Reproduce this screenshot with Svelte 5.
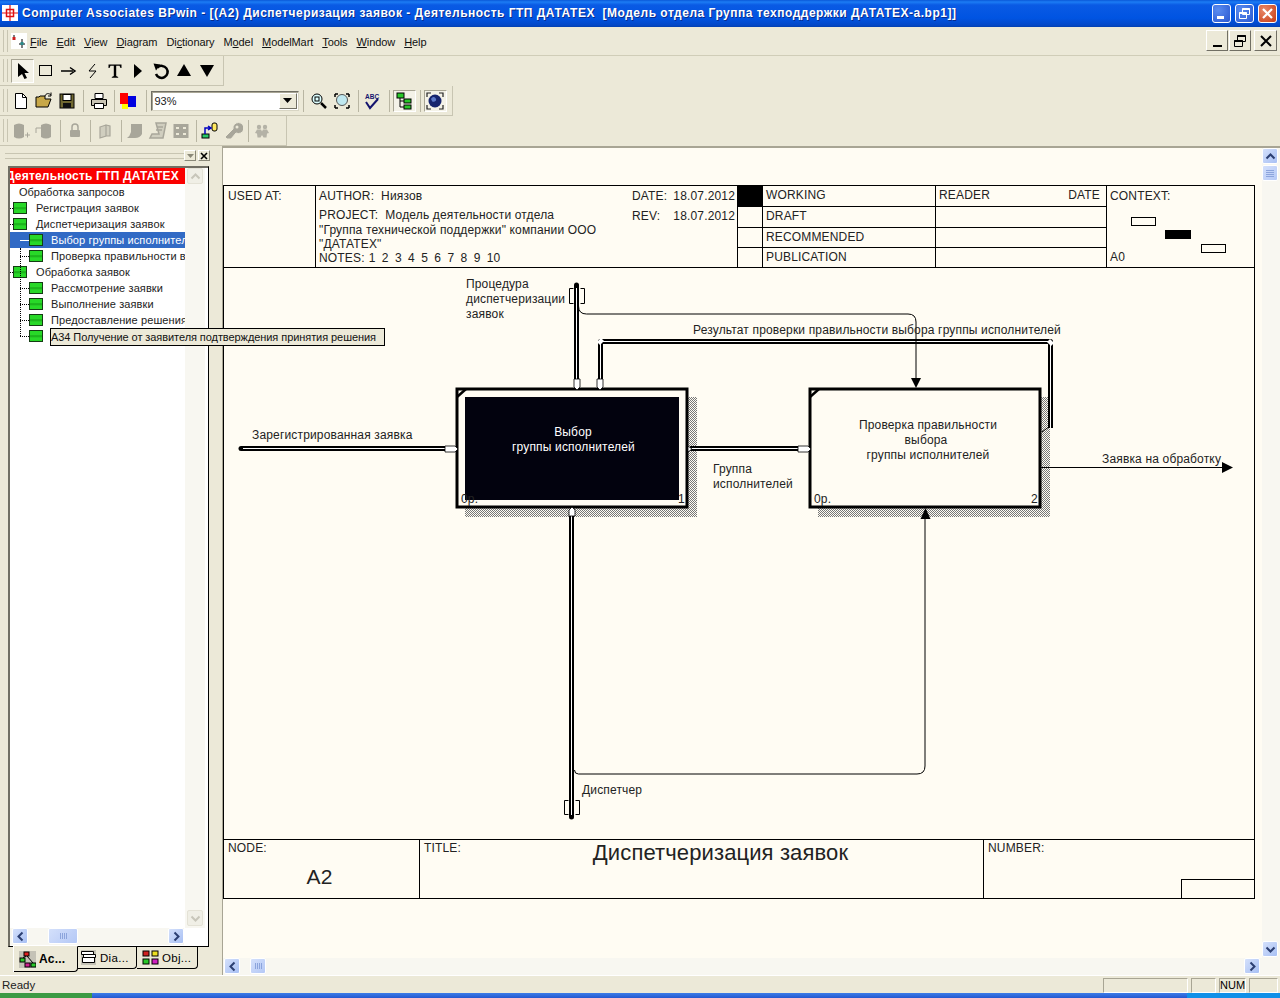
<script>
  const title = 'Computer Associates BPwin - [(A2) Диспетчеризация заявок - Деятельность ГТП ДАТАТЕХ  [Модель отдела Группа техподдержки ДАТАТЕХ-а.bp1]]';
  const menus = [
    ['F', 'ile'], ['E', 'dit'], ['V', 'iew'], ['D', 'iagram'], ['Di', 'c', 'tionary'], ['M', 'o', 'del'],
    ['M', 'odelMart'], ['T', 'ools'], ['W', 'indow'], ['H', 'elp']
  ];
  const tool1 = ['pointer', 'rect', 'arrow', 'squiggle', 'text', 'play', 'undo', 'up', 'down'];
  const tool3 = [
    ['g1'], ['g2'], [null, 8], ['lock'], [null, 7], ['g3'], [null, 7], ['g4'], ['g5'], ['g6'], [null, 6], ['model'], ['key'], [null, 6], ['people']
  ];
  const tree = [
    { level: 0, text: 'Обработка запросов', plain: true },
    { level: 1, text: 'Регистрация заявок' },
    { level: 1, text: 'Диспетчеризация заявок' },
    { level: 2, text: 'Выбор группы исполнителей', selected: true },
    { level: 2, text: 'Проверка правильности выбора группы исполнителей' },
    { level: 1, text: 'Обработка заявок' },
    { level: 2, text: 'Рассмотрение заявки' },
    { level: 2, text: 'Выполнение заявки' },
    { level: 2, text: 'Предоставление решения' },
    { level: 2, text: '' }
  ];
  const statuses = ['WORKING', 'DRAFT', 'RECOMMENDED', 'PUBLICATION'];
</script>

{#snippet icon(name)}
  <svg class="ico" viewBox="0 0 20 20" width="20" height="20">
    {#if name === 'pointer'}
      <path d="M5 2v14l4-3 2.500 5 2.500-1-2.500-5h4.500z" fill="#000" />
    {:else if name === 'rect'}
      <rect x="3.500" y="4.500" width="12" height="10" fill="none" stroke="#000" />
    {:else if name === 'arrow'}
      <path d="M2 10h12" stroke="#000" stroke-width="1.500" /><path d="M11 6.500l5 3.500-5 3.500" fill="none" stroke="#000" stroke-width="1.500" />
    {:else if name === 'squiggle'}
      <path d="M13 3l-6 7h7l-6 7" fill="none" stroke="#000" />
    {:else if name === 'text'}
      <path d="M3.500 3.500h13v3.500h-1l-1-2.300h-3.300V15l2 1v.700H6.800V16l2-1V4.700H5.500l-1 2.300h-1z" fill="#000" />
    {:else if name === 'play'}
      <path d="M6 3l8 7-8 7z" fill="#000" />
    {:else if name === 'undo'}
      <path d="M6.500 6.500A6 6 0 1 1 5 13" fill="none" stroke="#000" stroke-width="2.500" /><path d="M2.500 2.500l7 1-4.500 6z" fill="#000" />
    {:else if name === 'up'}
      <path d="M10 3l7 12H3z" fill="#000" />
    {:else if name === 'down'}
      <path d="M3 4h14l-7 12z" fill="#000" />
    {:else if name === 'new'}
      <path d="M4.500 2.500h7l4 4v11h-11z" fill="#fff" stroke="#000" /><path d="M11.500 2.500v4h4" fill="none" stroke="#000" />
    {:else if name === 'open'}
      <path d="M2 16V6h3l1-1h5v3h6l-3 8z" fill="#c8a848" stroke="#000" /><path d="M11 5c1-3 4-3 6-1M17 1.500V5h-3" fill="none" stroke="#000" />
    {:else if name === 'save'}
      <rect x="3" y="3" width="14" height="14" fill="#706830" stroke="#000" /><rect x="6" y="3.500" width="8" height="6" fill="#fff" stroke="#000" /><rect x="6" y="12" width="8" height="5" fill="#111" />
    {:else if name === 'print'}
      <path d="M6 2.500h8v5H6z" fill="#fff" stroke="#000" /><path d="M2.500 8.500h15v6h-15z" fill="#c8c4b4" stroke="#000" /><path d="M5.500 12.500h9v5h-9z" fill="#fff" stroke="#000" />
    {:else if name === 'colors'}
      <rect x="1" y="2" width="8" height="11" fill="#f00" /><rect x="9" y="5" width="8" height="11" fill="#0000e0" /><rect x="3" y="13" width="6" height="5" fill="#ff0" />
    {:else if name === 'zoomin'}
      <circle cx="8" cy="8" r="5" fill="#dff" stroke="#000" /><path d="M12 12l5 5" stroke="#000" stroke-width="2.500" /><rect x="6" y="6" width="4" height="4" fill="none" stroke="#000" />
    {:else if name === 'zoomfit'}
      <circle cx="10" cy="9" r="5.500" fill="#bfe8f0" stroke="#555" /><path d="M3 3h3M3 3v3M17 3h-3M17 3v3M3 17h3M3 17v-3M17 17h-3M17 17v-3" stroke="#000" stroke-width="1.500" fill="none" />
    {:else if name === 'spell'}
      <text x="3" y="8" class="abc">ABC</text><path d="M4 11l4 6 8-9" fill="none" stroke="#14146e" stroke-width="2" />
    {:else if name === 'treeview'}
      <rect x="3" y="2" width="7" height="5" fill="#28c828" stroke="#000" /><rect x="10" y="8" width="7" height="4" fill="#28c828" stroke="#000" /><rect x="10" y="14" width="7" height="4" fill="#28c828" stroke="#000" /><path d="M6 7v9h4M6 10h4" fill="none" stroke="#000" />
    {:else if name === 'globe'}
      <circle cx="10" cy="10" r="6.500" fill="#16246e" /><path d="M6 8c2-3 4-2 5 0s-3 4-4 2z" fill="#5c78c8" /><path d="M2 6V2h4M18 6V2h-4M2 14v4h4M18 14v4h-4" fill="none" stroke="#222" stroke-width="1.200" />
    {:else if name === 'g1'}
      <path d="M3 4q5-3 10 0v12q-5 3-10 0z" fill="#a8a69a" /><path d="M14 14h5M16.500 11.500v5" stroke="#a8a69a" />
    {:else if name === 'g2'}
      <path d="M7 4q5-3 10 0v12q-5 3-10 0z" fill="#a8a69a" /><path d="M7 7H2v5" fill="none" stroke="#a8a69a" />
    {:else if name === 'lock'}
      <path d="M7 9V6a3 3 0 0 1 6 0v3" fill="none" stroke="#a8a69a" stroke-width="1.500" /><rect x="5" y="9" width="10" height="7" rx="1" fill="#a8a69a" />
    {:else if name === 'g3'}
      <path d="M5 6l6-2v11l-6 2zM11 4l4 1v10l-4 0z" fill="#d0cebf" stroke="#a8a69a" stroke-width="1.200" />
    {:else if name === 'g4'}
      <path d="M6 3h11v10q-2 4-7 4H2q3-2 4-6z" fill="#a8a69a" />
    {:else if name === 'g5'}
      <path d="M8 2h10l-3 15H2l2-4h7zM9 6h6M8 9h6" fill="#d0cebf" stroke="#a8a69a" stroke-width="1.500" />
    {:else if name === 'g6'}
      <rect x="2.500" y="3" width="15" height="14" fill="#a8a69a" /><path d="M5 7h3M12 7h3M5 13h3M12 13h3" stroke="#ece9d8" stroke-width="2" />
    {:else if name === 'model'}
      <rect x="2" y="13" width="7" height="4" fill="#28c868" stroke="#000" /><rect x="12" y="2" width="5" height="8" rx="2" fill="#ffe860" stroke="#000" /><path d="M5 13V7h5M8 5l3 2-3 2" fill="none" stroke="#0000c0" stroke-width="1.500" />
    {:else if name === 'key'}
      <path d="M2 16l8-8a5.500 5.500 0 1 1 3 4l-5 6H4z" fill="#a8a69a" stroke="#ece9d8" /><circle cx="14" cy="6" r="1.500" fill="#ece9d8" />
    {:else if name === 'people'}
      <circle cx="7" cy="6" r="2.200" fill="#b4b2a6" /><circle cx="13" cy="6" r="2.200" fill="#b4b2a6" /><path d="M3 12l2-3.500h4l1 2 1-2h4l2 3.500-2 .500-.500 4h-3L10 14l-1.500 2.500h-3l-.5-4z" fill="#b4b2a6" />
    {/if}
  </svg>
{/snippet}

{#snippet scrollbtn(dir, off)}
  <span class="sbtn" class:off>
    <svg viewBox="0 0 11 11" width="11" height="11">
      <path
        d={dir === 'up' ? 'M1.500 7.500l4-4 4 4' : dir === 'down' ? 'M1.500 3.500l4 4 4-4' : dir === 'left' ? 'M7.500 1.500l-4 4 4 4' : 'M3.500 1.500l4 4-4 4'}
        fill="none"
        stroke={off ? '#c8c6ba' : '#2c3f72'}
        stroke-width="2"
      />
    </svg>
  </span>
{/snippet}

<div class="window">
  <header class="titlebar">
    <svg class="appicon" viewBox="0 0 16 16" width="16" height="16">
      <rect width="16" height="16" fill="#fff" />
      <rect x="4.500" y="4.500" width="7" height="7" fill="none" stroke="#e01010" stroke-width="1.500" />
      <path d="M8 0v16M0 8h16" stroke="#e01010" stroke-width="1.200" />
    </svg>
    <span class="titletext">{title}</span>
    <div class="capbtns">
      <span class="cap"><i class="minbar"></i></span>
      <span class="cap">
        <svg viewBox="0 0 19 19" width="19" height="19"><path d="M7.500 4.500h7v6h-7zM4.500 8.500h7v6h-7z" fill="none" stroke="#fff" /><path d="M7.500 5h7M4.500 9h7" stroke="#fff" stroke-width="2" /></svg>
      </span>
      <span class="cap close">
        <svg viewBox="0 0 19 19" width="19" height="19"><path d="M5 5l9 9M14 5l-9 9" stroke="#fff" stroke-width="2.200" /></svg>
      </span>
    </div>
  </header>

  <nav class="menubar">
    <i class="grip"></i>
    <svg class="docicon" viewBox="0 0 16 16" width="16" height="16">
      <rect width="16" height="16" fill="#fff" />
      <path d="M3 2v3M11 6v9M8 11h6" stroke="#000" /><rect x="1.500" y="4" width="3" height="3" fill="#d02020" /><rect x="9.500" y="9" width="3" height="3" fill="#2a8a8a" />
    </svg>
    {#each menus as m}
      <span class="menu">
        {#if m.length === 3}{m[0]}<u>{m[1]}</u>{m[2]}{:else}<u>{m[0]}</u>{m[1]}{/if}
      </span>
    {/each}
    <div class="mdibtns">
      <span class="mdi"><i class="mdimin"></i></span>
      <span class="mdi">
        <svg viewBox="0 0 14 14" width="14" height="14"><path d="M4.500 1.500h8v6h-8zM1.500 6.500h8v6h-8z" fill="#ece9d8" stroke="#000" /><path d="M4.500 2h8M1.500 7h8" stroke="#000" stroke-width="2" /></svg>
      </span>
      <span class="mdi mdix">
        <svg viewBox="0 0 14 14" width="14" height="14"><path d="M2 2l10 10M12 2L2 12" stroke="#000" stroke-width="2" /></svg>
      </span>
    </div>
  </nav>

  <div class="toolbar t1">
    <i class="grip"></i>
    {#each tool1 as name, i}
      <span class="tbtn" class:pressed={i === 0}>{@render icon(name)}</span>
    {/each}
  </div>

  <div class="toolbar t2">
    <i class="grip"></i>
    <span class="tbtn">{@render icon('new')}</span>
    <span class="tbtn">{@render icon('open')}</span>
    <span class="tbtn">{@render icon('save')}</span>
    <i class="sep s9"></i>
    <span class="tbtn">{@render icon('print')}</span>
    <i class="sep s7"></i>
    <span class="tbtn">{@render icon('colors')}</span>
    <i class="sep s10"></i>
    <div class="combo">
      <span class="comboval">93%</span>
      <span class="combobtn"><svg viewBox="0 0 9 5" width="9" height="5"><path d="M0 0h9L4.500 5z" fill="#000" /></svg></span>
    </div>
    <i class="sep s9"></i>
    <span class="tbtn">{@render icon('zoomin')}</span>
    <span class="tbtn">{@render icon('zoomfit')}</span>
    <i class="sep s7"></i>
    <span class="tbtn">{@render icon('spell')}</span>
    <i class="sep s9"></i>
    <span class="tbtn toggled">{@render icon('treeview')}</span>
    <i class="sep s8"></i>
    <span class="tbtn toggled">{@render icon('globe')}</span>
  </div>

  <div class="toolbar t3">
    <i class="grip"></i>
    {#each tool3 as [name, w]}
      {#if name}
        <span class="tbtn">{@render icon(name)}</span>
      {:else}
        <i class="sep" style:width="{w}px"></i>
      {/if}
    {/each}
  </div>

  <main class="work">
    <aside class="dock">
      <div class="dockhead">
        <i class="dockgrip"></i>
        <span class="dockbtn drop"><svg viewBox="0 0 7 4" width="7" height="4"><path d="M0 0h7L3.500 4z" fill="#8a8878" /></svg></span>
        <span class="dockbtn"><svg viewBox="0 0 8 8" width="8" height="8"><path d="M1 1l6 6M7 1L1 7" stroke="#000" stroke-width="1.600" /></svg></span>
      </div>
      <div class="treeframe">
        <div class="treebody">
          <div class="treelist">
            <div class="treehead"><span>Деятельность ГТП ДАТАТЕХ</span></div>
            <div class="rows">
              {#each tree as row}
                <div class="row lv{row.level}" class:selected={row.selected}>
                  {#if !row.plain}
                    <i class="conn"></i>
                    <i class="treeicon"></i>
                  {/if}
                  <span class="label">{row.text}</span>
                </div>
              {/each}
              <i class="vline"></i>
            </div>
          </div>
          <div class="vscroll small">
            {@render scrollbtn('up', true)}
            {@render scrollbtn('down', true)}
          </div>
        </div>
        <div class="hscroll small">
          {@render scrollbtn('left')}
          <span class="thumb hthumb tree-thumb"><b></b></span>
          <span class="fill"></span>
          {@render scrollbtn('right')}
        </div>
      </div>
      <div class="tabs">
        <span class="tab active">
          <svg viewBox="0 0 17 17" width="17" height="17"><rect width="17" height="17" fill="#c4c2b6" /><rect x="5" y="1" width="5" height="4" fill="#e02020" stroke="#000" /><rect x="1" y="7" width="5" height="4" fill="#28c828" stroke="#000" /><rect x="6" y="12" width="5" height="4" fill="#d02090" stroke="#000" /><rect x="12" y="12" width="5" height="4" fill="#28c828" stroke="#000" /><path d="M7 5l-3 2M8 5l6 7" stroke="#000" /></svg>
          <b>Ac...</b>
        </span>
        <span class="tab dia">
          <svg viewBox="0 0 17 17" width="17" height="17"><rect x="1" y="1" width="15" height="15" fill="#c4c2b6" /><path d="M1.500 2.500h12v3h-12zM3.500 5.500h12v3h-12zM2.500 8.500h12v5h-12z" fill="#fff" stroke="#000" /></svg>
          Dia...
        </span>
        <span class="tab obj">
          <svg viewBox="0 0 17 17" width="17" height="17"><rect x="1" y="2" width="6" height="5" fill="#d02020" stroke="#000" /><rect x="10" y="2" width="6" height="5" fill="#ece020" stroke="#000" /><rect x="1" y="10" width="6" height="5" fill="#28c828" stroke="#000" /><rect x="10" y="10" width="6" height="5" fill="#d020c0" stroke="#000" /></svg>
          Obj...
        </span>
      </div>
      <div class="tooltip">А34 Получение от заявителя подтверждения принятия решения</div>
    </aside>

    <section class="sheetwrap">
      <div class="sheetrow">
        <div class="canvas">
          <div class="form">
            <div class="formhead">
              <div class="cell usedat">USED AT:</div>
              <div class="cell author">
                <div class="authorcol">
                  <div class="authorline">AUTHOR:&nbsp; Ниязов</div>
                  <div class="project">PROJECT:&nbsp; Модель деятельности отдела<br />"Группа технической поддержки" компании ООО<br />"ДАТАТЕХ"</div>
                  <div class="notes">NOTES:<span class="digits">1 2 3 4 5 6 7 8 9 10</span></div>
                </div>
                <div class="datecol">
                  <div class="dline"><span>DATE:</span><span>18.07.2012</span></div>
                  <div class="dline rev"><span>REV:</span><span>18.07.2012</span></div>
                </div>
              </div>
              <div class="status">
                {#each statuses as s, i}
                  <div class="st mark" class:black={i === 0}></div>
                  <div class="st name">{s}</div>
                  <div class="st reader">
                    {#if i === 0}<span>READER</span><span>DATE</span>{/if}
                  </div>
                {/each}
              </div>
              <div class="cell context">
                <span>CONTEXT:</span>
                <i class="ctx c1"></i>
                <i class="ctx c2"></i>
                <i class="ctx c3"></i>
                <span class="ctxnode">A0</span>
              </div>
            </div>

            <svg class="diagram" viewBox="224 268 1030 571" width="1030" height="571">
              <defs>
                <pattern id="dither" width="2" height="2" patternUnits="userSpaceOnUse">
                  <rect width="2" height="2" fill="#fffcf3" />
                  <rect width="1" height="1" fill="#777" />
                  <rect x="1" y="1" width="1" height="1" fill="#777" />
                </pattern>
              </defs>

              <!-- shadows -->
              <path d="M688 397h9v120H465v-9h223z" fill="url(#dither)" />
              <path d="M1041 397h9v120H818v-9h223z" fill="url(#dither)" />

              <!-- tunnel arrows -->
              <g fill="none" stroke-linejoin="round">
                <path d="M241 448.500H450" stroke="#000" stroke-width="5" stroke-linecap="round" />
                <path d="M243 448.500H450" stroke="#fff" />
                <path d="M576.500 285V384" stroke="#000" stroke-width="5" stroke-linecap="round" />
                <path d="M576.500 288V384" stroke="#fff" />
                <path d="M600.500 384V341.500H1050.500V428" stroke="#000" stroke-width="5" />
                <path d="M600.500 384V341.500H1050.500V428" stroke="#fff" />
                <path d="M690 448.500H803" stroke="#000" stroke-width="5" />
                <path d="M690 448.500H803" stroke="#fff" />
                <path d="M571.500 514V817" stroke="#000" stroke-width="5" stroke-linecap="round" />
                <path d="M571.500 514V815" stroke="#fff" />
                <path d="M573.500 288.500h-4v15h4M580.500 288.500h4v15h-4" stroke="#000" />
                <path d="M568.500 800.500h-4v14h4M575.500 800.500h4v14h-4" stroke="#000" />
                <path d="M578.500 300v6q0 8 8 8H908q8 0 8 8V380" stroke="#000" />
                <path d="M574.500 770q0 4 4 4H917q8 0 8-8V518" stroke="#000" />
                <path d="M1041 467.500H1224" stroke="#000" />
                <path d="M1042 432l8-6" stroke="#000" />
              </g>
              <path d="M911 378h10l-5 10z" fill="#000" />
              <path d="M1222 462l11 5.500-11 5.500z" fill="#000" />
              <path d="M925.500 508l5 11h-10z" fill="#000" />

              <!-- boxes -->
              <rect x="457" y="389" width="230" height="118" fill="#fffcf3" stroke="#000" stroke-width="3" />
              <rect x="465" y="397" width="214" height="103" fill="#02020e" />
              <path d="M457 397l9-8" stroke="#000" stroke-width="2.500" />
              <rect x="810" y="389" width="230" height="118" fill="#fffcf3" stroke="#000" stroke-width="3" />
              <path d="M810 397l9-8" stroke="#000" stroke-width="2.500" />

              <!-- arrow heads on the box edges -->
              <g fill="#fff" stroke="#000" stroke-width="0.800">
                <path d="M445 446h10l3 3-3 3h-10z" />
                <path d="M798 446h10l3 3-3 3h-10z" />
                <path d="M574 379h6v8l-3 3-3-3z" />
                <path d="M597 379h6v8l-3 3-3-3z" />
                <path d="M569 516h6v-6l-3-3-3 3z" />
                <path d="M688 446l4 3-4 3z" />
              </g>
              <path d="M597 342l4-4 3 3-4 4z" fill="#fff" />
              <path d="M1047 342l4 4 3-3-4-4z" fill="#fff" />

              <g class="dtext">
                <text x="252" y="439">Зарегистрированная заявка</text>
                <text x="466" y="288">Процедура</text>
                <text x="466" y="303">диспетчеризации</text>
                <text x="466" y="318">заявок</text>
                <text x="693" y="334">Результат проверки правильности выбора группы исполнителей</text>
                <text x="713" y="473">Группа</text>
                <text x="713" y="488">исполнителей</text>
                <text x="1102" y="463">Заявка на обработку</text>
                <text x="582" y="794">Диспетчер</text>
                <text x="573" y="436" class="mid white">Выбор</text>
                <text x="573.500" y="451" class="mid white">группы исполнителей</text>
                <text x="461" y="503">0р.</text>
                <text x="678" y="503">1</text>
                <text x="928" y="429" class="mid">Проверка правильности</text>
                <text x="926" y="444" class="mid">выбора</text>
                <text x="928" y="459" class="mid">группы исполнителей</text>
                <text x="814" y="503">0р.</text>
                <text x="1031" y="503">2</text>
              </g>
            </svg>

            <div class="formfoot">
              <div class="fcell nodecell">
                <span>NODE:</span>
                <span class="nodeval">A2</span>
              </div>
              <div class="fcell ftitle">
                <span>TITLE:</span>
                <span class="titleval">Диспетчеризация заявок</span>
              </div>
              <div class="fcell number">
                <span>NUMBER:</span>
                <i class="numbox"></i>
              </div>
            </div>
          </div>
        </div>
        <div class="vscroll large">
          {@render scrollbtn('up')}
          <span class="thumb vthumb"><b></b></span>
          <span class="fill"></span>
          {@render scrollbtn('down')}
        </div>
      </div>
      <div class="hscroll large">
        {@render scrollbtn('left')}
        <span class="thumb hthumb big"><b></b></span>
        <span class="fill"></span>
        {@render scrollbtn('right')}
      </div>
    </section>
  </main>

  <footer class="statusbar">
    <span class="ready">Ready</span>
    <span class="pane p1"></span>
    <span class="pane p2"></span>
    <span class="pane p3">NUM</span>
    <span class="pane p4"></span>
  </footer>
  <div class="taskbar"><i class="start"></i><i class="tray"></i></div>
</div>

<style>
  :global(body) {
    margin: 0;
    background: #ece9d8;
  }

  .window {
    width: 1280px;
    height: 998px;
    overflow: hidden;
    display: flex;
    flex-direction: column;
    background: #ece9d8;
    font-family: "Liberation Sans", Arial, sans-serif;
    font-size: 11px;
    color: #000;
  }

  i {
    display: block;
    font-style: normal;
  }

  .titlebar {
    height: 27px;
    flex: none;
    box-sizing: border-box;
    display: flex;
    align-items: center;
    padding: 0 3px 1px 2px;
    background: linear-gradient(#0a58d8 0, #1c7cf4 2px, #0a5ae4 5px, #0054e2 18px, #0348c8 25px, #0240b0 27px);
    color: #fff;
  }

  .appicon {
    flex: none;
    margin-right: 4px;
  }

  .titletext {
    font-size: 12px;
    font-weight: bold;
    letter-spacing: 0.5px;
    white-space: pre;
    text-shadow: 1px 1px 0 #0a2c8c;
  }

  .capbtns {
    margin-left: auto;
    display: flex;
    gap: 4px;
  }

  .cap {
    width: 19px;
    height: 19px;
    box-sizing: border-box;
    border: 1px solid #fff;
    border-radius: 3px;
    background: radial-gradient(circle at 30% 30%, #5a8cf0, #2a58d0);
    position: relative;
    display: block;
  }

  .cap svg {
    position: absolute;
    left: -1px;
    top: -1px;
  }

  .cap.close {
    background: radial-gradient(circle at 30% 30%, #e88868, #c83c14);
  }

  .minbar {
    width: 7px;
    height: 3px;
    background: #fff;
    margin: 11px 0 0 4px;
  }

  .menubar {
    height: 29px;
    flex: none;
    box-sizing: border-box;
    display: flex;
    align-items: center;
    padding-left: 3px;
    border-bottom: 1px solid #d0cdb8;
  }

  .grip {
    flex: none;
    width: 5px;
    align-self: stretch;
    margin: 3px 0;
    border-left: 1px solid #c8c5b2;
    border-right: 1px solid #c8c5b2;
    box-sizing: border-box;
  }

  .docicon {
    margin: 0 3px 0 3px;
    flex: none;
  }

  .menu {
    margin: 1px 9.100px 0 0;
    font-size: 11px;
    letter-spacing: -0.1px;
    color: #111;
  }

  .mdibtns {
    margin-left: auto;
    display: flex;
    gap: 1px;
    padding-right: 3px;
    margin-top: -1px;
  }

  .mdi {
    width: 22px;
    height: 21px;
    box-sizing: border-box;
    border: 1px solid;
    border-color: #fff #716f64 #716f64 #fff;
    display: flex;
    align-items: center;
    justify-content: center;
  }

  .mdix {
    margin-left: 2px;
    width: 23px;
  }

  .mdimin {
    width: 9px;
    height: 2px;
    background: #000;
    margin-top: 10px;
  }

  .toolbar {
    height: 30px;
    flex: none;
    box-sizing: border-box;
    display: flex;
    align-items: center;
    padding-left: 3px;
    border-bottom: 1px solid #c8c5b2;
    border-right: 1px solid #c8c5b2;
  }

  .toolbar .grip {
    margin-right: 1.500px;
  }

  .t1 {
    width: 224px;
  }

  .t1 .grip {
    margin-right: 3px;
  }

  .t2 {
    width: 453px;
  }

  .t3 {
    width: 287px;
  }

  .tbtn {
    width: 23px;
    height: 22px;
    box-sizing: border-box;
    flex: none;
    display: flex;
    align-items: center;
    justify-content: center;
  }

  .tbtn.pressed,
  .tbtn.toggled {
    border: 1px solid;
    border-color: #a8a594 #fff #fff #a8a594;
    background: #f4f2e8;
  }

  .tbtn.pressed {
    height: 24px;
  }

  .sep {
    flex: none;
    height: 22px;
    background: linear-gradient(90deg, transparent 50%, #b8b5a2 50%, #b8b5a2 calc(50% + 1px), transparent calc(50% + 1px));
  }

  .s7 { width: 7px; }
  .s8 { width: 8px; }
  .s9 { width: 9px; }
  .s10 { width: 10px; }

  .abc {
    font-size: 6.500px;
    font-weight: bold;
    fill: #14146e;
  }

  .combo {
    flex: none;
    width: 148px;
    height: 20px;
    box-sizing: border-box;
    display: flex;
    align-items: stretch;
    background: #fff;
    border: 1px solid;
    border-color: #716f64 #d8d5c4 #d8d5c4 #716f64;
    box-shadow: inset 1px 1px 0 #a8a594;
  }

  .comboval {
    flex: 1;
    padding: 3px 0 0 3px;
    font-size: 11px;
    color: #222;
  }

  .combobtn {
    width: 16px;
    margin: 1px;
    background: #ece9d8;
    border: 1px solid;
    border-color: #fff #716f64 #716f64 #fff;
    display: flex;
    align-items: center;
    justify-content: center;
  }

  .work {
    flex: 1;
    min-height: 0;
    display: flex;
  }

  .dock {
    flex: none;
    width: 222px;
    position: relative;
    display: flex;
    flex-direction: column;
    padding: 4px 0 0 8px;
    box-sizing: border-box;
  }

  .dockhead {
    height: 16px;
    margin-left: -3px;
    width: 205px;
    display: flex;
    align-items: flex-start;
    flex: none;
  }

  .dockgrip {
    flex: 1;
    height: 4px;
    margin-top: 3px;
    border-top: 1px solid #c8c5b2;
    border-bottom: 1px solid #c8c5b2;
  }

  .dockbtn {
    width: 12px;
    height: 11px;
    box-sizing: border-box;
    border: 1px solid;
    border-color: #fff #8a8878 #8a8878 #fff;
    display: flex;
    align-items: center;
    justify-content: center;
    flex: none;
  }

  .dockbtn.drop {
    margin-right: 2px;
  }

  .treeframe {
    width: 201px;
    height: 781px;
    box-sizing: border-box;
    flex: none;
    border: 1px solid #000;
    border-left-color: #716f64;
    border-top-color: #716f64;
    padding: 1px;
    display: flex;
    flex-direction: column;
    background: #fff;
    box-shadow: inset 1px 1px 0 #716f64;
  }

  .treebody {
    flex: 1;
    min-height: 0;
    display: flex;
  }

  .treelist {
    width: 175px;
    overflow: hidden;
    flex: none;
    background: #fff;
  }

  .treehead {
    height: 16px;
    background: #fa0000;
    color: #fff;
    font-size: 12px;
    font-weight: bold;
    line-height: 16px;
    white-space: nowrap;
    display: flex;
    justify-content: flex-end;
    padding-right: 6px;
    letter-spacing: 0.2px;
  }

  .rows {
    position: relative;
  }

  .row {
    height: 16px;
    display: flex;
    align-items: center;
    white-space: nowrap;
    font-size: 11px;
    letter-spacing: 0.1px;
    color: #222;
    position: relative;
    overflow: hidden;
  }

  .row.lv0 {
    padding-left: 9px;
    letter-spacing: 0;
  }

  .row.lv1 {
    padding-left: 0;
  }

  .row.lv2 {
    padding-left: 10px;
  }

  .conn {
    width: 9px;
    border-bottom: 1px dotted #000;
    flex: none;
  }

  .lv1 .conn {
    width: 3px;
  }

  .treeicon {
    width: 14px;
    height: 12px;
    box-sizing: border-box;
    flex: none;
    background: linear-gradient(#28d828, #28d828 35%, #18a818 50%, #28d828 70%);
    border: 1px solid #143c14;
  }

  .label {
    margin-left: 8px;
  }

  .lv0 .label {
    margin-left: 0;
  }

  .lv1 .label {
    margin-left: 9px;
  }

  .row.selected {
    background: #316ac5;
    color: #fff;
  }

  .selected .conn {
    border-bottom: 1px solid #fff;
  }

  .vline {
    position: absolute;
    left: 10px;
    top: 64px;
    height: 88px;
    border-left: 1px dotted #000;
  }

  .vscroll {
    flex: none;
    display: flex;
    flex-direction: column;
    background: #f8f7f1;
  }

  .vscroll.small {
    width: 20px;
    justify-content: space-between;
    padding-left: 2px;
    box-sizing: border-box;
    padding-bottom: 2px;
  }

  .vscroll.large {
    width: 18px;
    padding: 0 0 1px;
    box-sizing: border-box;
    gap: 1px;
  }

  .hscroll {
    flex: none;
    display: flex;
    height: 17px;
    box-sizing: border-box;
    background: #f8f7f1;
    gap: 0;
  }

  .hscroll.small {
    padding-left: 2px;
    margin-right: 23px;
  }

  .hscroll.large {
    height: 17px;
    padding: 0 20px 0 1px;
  }

  .sbtn {
    width: 16px;
    height: 16px;
    flex: none;
    box-sizing: border-box;
    border: 1px solid #fff;
    border-radius: 2px;
    background: linear-gradient(135deg, #d4e0fb, #a8c0f4);
    display: flex;
    align-items: center;
    justify-content: center;
  }

  .sbtn.off {
    background: #f0efe6;
    border-color: #e4e2d6;
  }

  .thumb {
    box-sizing: border-box;
    border: 1px solid #fff;
    border-radius: 2px;
    background: linear-gradient(135deg, #d4e0fb, #b4c8f6);
    display: flex;
    align-items: center;
    justify-content: center;
    flex: none;
  }

  .thumb b {
    display: block;
  }

  .hthumb {
    height: 16px;
  }

  .hthumb b {
    width: 7px;
    height: 6px;
    background: repeating-linear-gradient(90deg, #8ca4dc 0 1px, transparent 1px 2px);
  }

  .tree-thumb {
    width: 30px;
    margin-left: 20px;
  }

  .big {
    width: 16px;
    margin-left: 10px;
  }

  .vthumb {
    width: 16px;
    height: 16px;
  }

  .vthumb b {
    width: 8px;
    height: 7px;
    background: repeating-linear-gradient(#8ca4dc 0 1px, transparent 1px 2px);
  }

  .fill {
    flex: 1;
  }

  .tabs {
    display: flex;
    padding-left: 6px;
    margin-top: -1px;
    height: 27px;
    flex: none;
    position: relative;
  }

  .tab {
    box-sizing: border-box;
    width: 59px;
    height: 22px;
    display: flex;
    align-items: center;
    gap: 3px;
    padding-left: 3px;
    font-size: 11.500px;
    letter-spacing: 0.3px;
    border-right: 1px solid #000;
    border-bottom: 1px solid #000;
    border-radius: 0 0 4px 0;
    margin-top: 1px;
  }

  .tab.dia {
    padding-left: 2px;
  }

  .tab.obj {
    width: 61px;
    padding-left: 5px;
  }

  .tab.active {
    width: 64px;
    height: 26px;
    margin-top: 0;
    border-top: 1px solid #ece9d8;
    padding-left: 5px;
    font-size: 12px;
    letter-spacing: 0.2px;
    box-shadow: -1px 0 0 #fff;
  }

  .tab.active svg {
    flex: none;
  }

  .tooltip {
    position: absolute;
    left: 50px;
    top: 182px;
    width: 335px;
    height: 18px;
    box-sizing: border-box;
    padding: 1px 0 0 0;
    background: #ece9d8;
    border: 1px solid #000;
    font-size: 11px;
    line-height: 14px;
    white-space: nowrap;
    letter-spacing: -0.07px;
    color: #111;
  }

  .sheetwrap {
    flex: 1;
    min-width: 0;
    display: flex;
    flex-direction: column;
    border-top: 2px solid #a8a594;
    border-left: 1px solid #a8a594;
    background: #f8f7f1;
  }

  .sheetrow {
    height: 810px;
    flex: none;
    display: flex;
  }

  .canvas {
    width: 1039px;
    flex: none;
    background: #fffcf3;
    padding: 37px 0 0 0;
    box-sizing: border-box;
  }

  .form {
    width: 1032px;
    margin-left: 0;
    border: 1px solid #000;
    box-sizing: border-box;
    display: flex;
    flex-direction: column;
    height: 714px;
    font-size: 12px;
    color: #222;
    letter-spacing: 0.16px;
  }

  .formhead {
    height: 81px;
    display: flex;
    flex: none;
    border-bottom: 1px solid #000;
  }

  .cell {
    box-sizing: border-box;
    border-right: 1px solid #000;
    padding: 3px 0 0 3px;
    line-height: 14px;
    flex: none;
  }

  .usedat {
    width: 92px;
    padding-left: 4px;
  }

  .author {
    width: 422px;
    display: flex;
    justify-content: space-between;
    padding-right: 2px;
  }

  .authorcol .project {
    margin-top: 5px;
    line-height: 14.500px;
  }

  .notes {
    line-height: 12px;
    display: flex;
  }

  .digits {
    margin-left: 4px;
    word-spacing: 2.800px;
  }

  .datecol {
    width: 103px;
  }

  .dline {
    display: flex;
    justify-content: space-between;
  }

  .rev {
    margin-top: 6px;
  }

  .status {
    flex: none;
    width: 369px;
    display: grid;
    grid-template-columns: 25px 173px 171px;
    grid-template-rows: 21px 21px 20px 19px;
  }

  .st {
    box-sizing: border-box;
    border-right: 1px solid #000;
    border-bottom: 1px solid #000;
    line-height: 19px;
    padding-left: 3px;
  }

  .status .st:nth-last-child(-n + 3) {
    border-bottom: 0;
  }

  .st.black {
    background: #000;
  }

  .reader {
    display: flex;
    justify-content: space-between;
    padding-right: 6px;
  }

  .context {
    flex: 1;
    position: relative;
    border-right: 0;
  }

  .ctx {
    position: absolute;
    width: 25px;
    height: 9px;
    box-sizing: border-box;
    border: 1px solid #000;
  }

  .c1 { left: 24px; top: 31px; }
  .c2 { left: 58px; top: 44px; width: 26px; background: #000; }
  .c3 { left: 94px; top: 58px; }

  .ctxnode {
    position: absolute;
    left: 3px;
    top: 64px;
  }

  .diagram {
    display: block;
    flex: none;
  }

  .dtext text {
    font-family: "Liberation Sans", Arial, sans-serif;
    font-size: 12px;
    letter-spacing: 0.16px;
    fill: #222;
  }

  .dtext text.mid {
    text-anchor: middle;
  }

  .dtext text.white {
    fill: #fff;
  }

  .formfoot {
    flex: 1;
    display: flex;
    border-top: 1px solid #000;
  }

  .fcell {
    box-sizing: border-box;
    border-right: 1px solid #000;
    padding: 1px 0 0 4px;
    position: relative;
    line-height: 14px;
  }

  .nodecell {
    width: 196px;
  }

  .nodeval {
    position: absolute;
    left: 0;
    width: 191px;
    text-align: center;
    top: 25px;
    font-size: 21px;
    line-height: 24px;
  }

  .ftitle {
    width: 564px;
  }

  .titleval {
    position: absolute;
    left: 19px;
    width: 100%;
    text-align: center;
    top: 0;
    font-size: 22px;
    line-height: 25px;
    letter-spacing: 0.12px;
  }

  .number {
    flex: 1;
    border-right: 0;
  }

  .numbox {
    position: absolute;
    right: 0;
    bottom: 0;
    width: 73px;
    height: 19px;
    box-sizing: border-box;
    border-left: 1px solid #000;
    border-top: 1px solid #000;
  }

  .statusbar {
    height: 18px;
    flex: none;
    display: flex;
    align-items: flex-end;
    gap: 3px;
    position: relative;
    padding-right: 2px;
    box-sizing: border-box;
    border-top: 1px solid #fff;
  }

  .ready {
    margin-right: auto;
    align-self: center;
    padding-left: 2px;
    font-size: 11.500px;
    color: #222;
  }

  .pane {
    height: 15px;
    box-sizing: border-box;
    border: 1px solid;
    border-color: #a8a594 #fff #fff #a8a594;
    font-size: 11px;
    line-height: 13px;
    text-align: center;
  }

  .p1 { width: 85px; }
  .p2 { width: 25px; }
  .p3 { width: 27px; }
  .p4 { width: 29px; }

  .taskbar {
    height: 5px;
    flex: none;
    display: flex;
    justify-content: space-between;
    background: linear-gradient(#3c7ce8, #2458d0);
  }

  .start {
    width: 92px;
    background: #3c9a44;
  }

  .tray {
    width: 93px;
    background: #1090e8;
  }
</style>
